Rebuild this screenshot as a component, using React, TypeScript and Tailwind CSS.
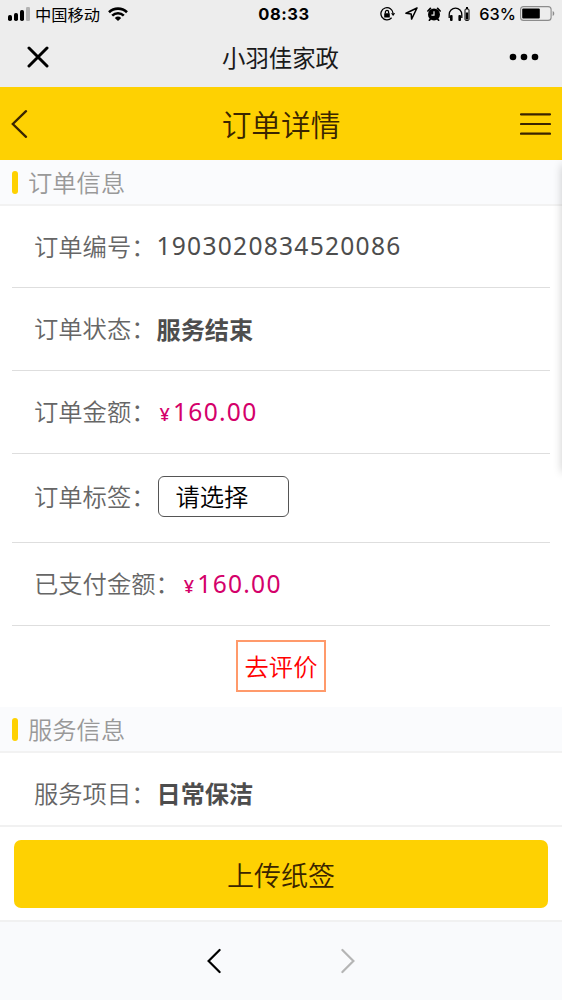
import type { ReactNode } from 'react';

const orderRows: { label: string; value: ReactNode; height: string }[] = [
  { label: '订单编号：', value: '1903020834520086', height: 'h-[82px]' },
  { label: '订单状态：', value: <Strong>服务结束</Strong>, height: 'h-[83px]' },
  { label: '订单金额：', value: <Price amount="160.00" />, height: 'h-[83px]' },
  { label: '订单标签：', value: <TagSelect />, height: 'h-[89px] pb-[3px]' },
  { label: '已支付金额：', value: <Price amount="160.00" />, height: 'h-[83px]' },
];

function Strong({ children }: { children: ReactNode }) {
  return <b className="block pt-[2px] text-[24.2px] font-bold tracking-normal">{children}</b>;
}

function Price({ amount }: { amount: string }) {
  return (
    <span className="flex items-baseline pl-[3px] text-[#d4006a]">
      <span className="text-[18px] font-medium">¥</span>
      <span className="pl-[2px]">{amount}</span>
    </span>
  );
}

function TagSelect() {
  return (
    <button className="ml-[2px] flex h-[41px] w-[131px] items-center rounded-[6px] border-[1.5px] border-[#555] pt-px pl-4 text-[24.3px] font-[350] tracking-normal text-black">
      请选择
    </button>
  );
}

function StatusBar() {
  return (
    <div className="flex h-7 items-center pr-[7px] pl-2 text-black">
      <div className="flex flex-1 items-center">
        <svg width="22" height="14" viewBox="0 0 22 14" className="shrink-0">
          <rect x="0" y="8" width="4" height="6" rx="1.8" />
          <rect x="6" y="6" width="4" height="8" rx="1.8" />
          <rect x="12" y="3" width="4" height="11" rx="1.8" />
          <rect x="18" y="0" width="4" height="14" rx="1.2" fill="#b3b3b3" />
        </svg>
        <span className="ml-[5px] text-[16.3px]">中国移动</span>
        <svg width="20" height="14" viewBox="0 0 20 14" className="ml-2 shrink-0" fill="none" stroke="#000" strokeWidth="2.6">
          <path d="M1 5.2a13 13 0 0 1 18 0" />
          <path d="M4.2 8.6a8.4 8.4 0 0 1 11.6 0" />
          <path d="M6.8 11l3.2 3 3.2-3a4.8 4.8 0 0 0-6.4 0z" fill="#000" stroke="none" />
        </svg>
      </div>
      <span className="pt-px pl-[5px] font-[Inter] text-[16.5px] font-bold tracking-[0.6px]">08:33</span>
      <div className="flex flex-1 items-center justify-end">
        <svg width="15" height="14" viewBox="0 0 15 14" className="mr-px" fill="none" stroke="#000" strokeWidth="1.3">
          <path d="M11.6 10.8A6.1 6.1 0 1 1 13.1 6.4" />
          <path d="M11 6.2h4.2l-2.1 2.7z" fill="#000" stroke="none" />
          <rect x="4.2" y="6.2" width="5.6" height="4.3" rx=".5" fill="#000" stroke="none" />
          <path d="M5.4 6.4V5a1.6 1.6 0 0 1 3.2 0v1.4" />
        </svg>
        <svg width="13" height="13" viewBox="0 0 13 13" className="ml-[9px]" fill="none" stroke="#000" strokeWidth="1.5" strokeLinejoin="round">
          <path d="M12 1L1 6.3l5.2.6.4 5.2z" />
        </svg>
        <svg width="14" height="14" viewBox="0 0 14 14" className="ml-[9px]">
          <circle cx="7" cy="7.6" r="6" />
          <path d="M.9 4L3.4 1.4M13.1 4L10.6 1.4M3.4 12l-1 1.3M10.6 12l1 1.3" stroke="#000" strokeWidth="1.7" strokeLinecap="round" />
          <path d="M7 4.2v4H4.4" fill="none" stroke="#ededed" strokeWidth="1.2" />
        </svg>
        <svg width="22" height="14" viewBox="0 0 22 14" className="ml-[7px]">
          <path d="M1.2 11V7.4a6.3 6.3 0 0 1 12.6 0V11" fill="none" stroke="#000" strokeWidth="1.3" />
          <rect x="2" y="8" width="2.6" height="6" rx="1" />
          <rect x="10.4" y="8" width="2.6" height="6" rx="1" />
          <rect x="17" y="2" width="4" height="11.4" rx="1" fill="none" stroke="#000" />
          <path d="M18 0h2v2h-2zM17.8 5.5h2.4v7h-2.4z" />
        </svg>
        <span className="ml-[9px] pt-px font-[Inter] text-[16.3px] font-medium">63%</span>
        <svg width="35" height="15" viewBox="0 0 35 15" className="ml-1 shrink-0">
          <rect x=".6" y=".6" width="30.5" height="13.8" rx="3" fill="none" stroke="#8c8c8c" strokeWidth="1.1" />
          <rect x="2.2" y="2.4" width="17.6" height="10.2" rx="1" />
          <path d="M32.7 5v5c2.1-.8 2.1-4.2 0-5z" fill="#8c8c8c" />
        </svg>
      </div>
    </div>
  );
}

function AppBar() {
  return (
    <div className="flex h-[59px] items-center justify-between pr-[23px] pb-px pl-[27px]">
      <svg width="22" height="22" viewBox="0 0 22 22" stroke="#000" strokeWidth="3" strokeLinecap="round">
        <path d="M2 2l18 18M20 2L2 20" />
      </svg>
      <h1 className="pt-px pl-[3px] text-[23.4px] text-[#1a1a1a]">小羽佳家政</h1>
      <svg width="30" height="8" viewBox="0 0 30 8">
        <circle cx="4" cy="4" r="3.3" />
        <circle cx="15" cy="4" r="3.3" />
        <circle cx="26" cy="4" r="3.3" />
      </svg>
    </div>
  );
}

function PageHeader() {
  return (
    <header className="flex h-[73px] items-center justify-between bg-[#fed102] px-[11px] text-[#3a2500]">
      <svg width="31" height="28" viewBox="0 0 31 28" fill="none" stroke="currentColor" strokeWidth="2.3" strokeLinecap="round">
        <path d="M15 1.2L1.8 14 15 26.8" />
      </svg>
      <h2 className="text-[29.7px] font-[350]">订单详情</h2>
      <svg width="31" height="24" viewBox="0 0 31 24" stroke="currentColor" strokeWidth="2.2" strokeLinecap="round">
        <path d="M1 2.3h29M1 12h29M1 21.7h29" />
      </svg>
    </header>
  );
}

function SectionTitle({ children }: { children: ReactNode }) {
  return (
    <div className="flex h-[46px] shrink-0 items-center border-b-2 border-[#f2f2f2] bg-[#fafbfd] pl-3">
      <span className="h-[23px] w-[6px] rounded-full bg-[#fed102]" />
      <span className="ml-[10px] text-[24.3px] font-[350] text-[#999]">{children}</span>
    </div>
  );
}

function InfoRow({ label, children }: { label: string; children: ReactNode }) {
  return (
    <>
      <span className="pb-px text-[24.3px] font-[350] text-[#666]">{label}</span>
      <span className="pl-px font-['Noto_Sans','Noto_Sans_CJK_SC',sans-serif] text-[24.6px] tracking-[1.25px] text-[#4d4d4d]">
        {children}
      </span>
    </>
  );
}

export default function App() {
  return (
    <div className="relative flex h-[1000px] w-[562px] flex-col overflow-hidden bg-white font-['Noto_Sans_CJK_SC',sans-serif] leading-none">
      <div className="h-[87px] shrink-0 bg-[#ededed]">
        <StatusBar />
        <AppBar />
      </div>
      <PageHeader />

      <SectionTitle>订单信息</SectionTitle>
      <div className="px-3">
        {orderRows.map((row) => (
          <div key={row.label} className={`flex items-center border-b border-[#dedede] pl-[22px] ${row.height}`}>
            <InfoRow label={row.label}>{row.value}</InfoRow>
          </div>
        ))}
      </div>
      <div className="flex h-[81px] items-center justify-center pb-px">
        <button className="h-[52px] w-[90px] border-2 border-[#ff9a6b] text-[24.3px] font-[350] text-[#ff0000]">
          去评价
        </button>
      </div>

      <SectionTitle>服务信息</SectionTitle>
      <div className="flex h-[72px] items-center pt-[9px] pl-[34px]">
        <InfoRow label="服务项目：">
          <Strong>日常保洁</Strong>
        </InfoRow>
      </div>

      <div className="flex h-[97px] items-center border-y-2 border-[#f1f1f1] px-[14px] pt-px">
        <button className="h-[68px] w-full rounded-[7px] bg-[#fed102] text-[27px] font-[350] text-[#3a2500]">
          上传纸签
        </button>
      </div>
      <nav className="flex flex-1 items-center justify-center gap-[120px] bg-[#f9fafc]">
        <svg width="14" height="26" viewBox="0 0 14 26" fill="none" stroke="#000" strokeWidth="2.2" strokeLinecap="round">
          <path d="M12.6 2L1.6 13l11 11" />
        </svg>
        <svg width="14" height="26" viewBox="0 0 14 26" fill="none" stroke="#b5b5b5" strokeWidth="2.2" strokeLinecap="round">
          <path d="M1.4 2l11 11-11 11" />
        </svg>
      </nav>

      <div className="absolute top-[165px] left-[562px] h-[307px] w-5 shadow-[0_0_10px_rgba(0,0,0,0.2)]" />
    </div>
  );
}
